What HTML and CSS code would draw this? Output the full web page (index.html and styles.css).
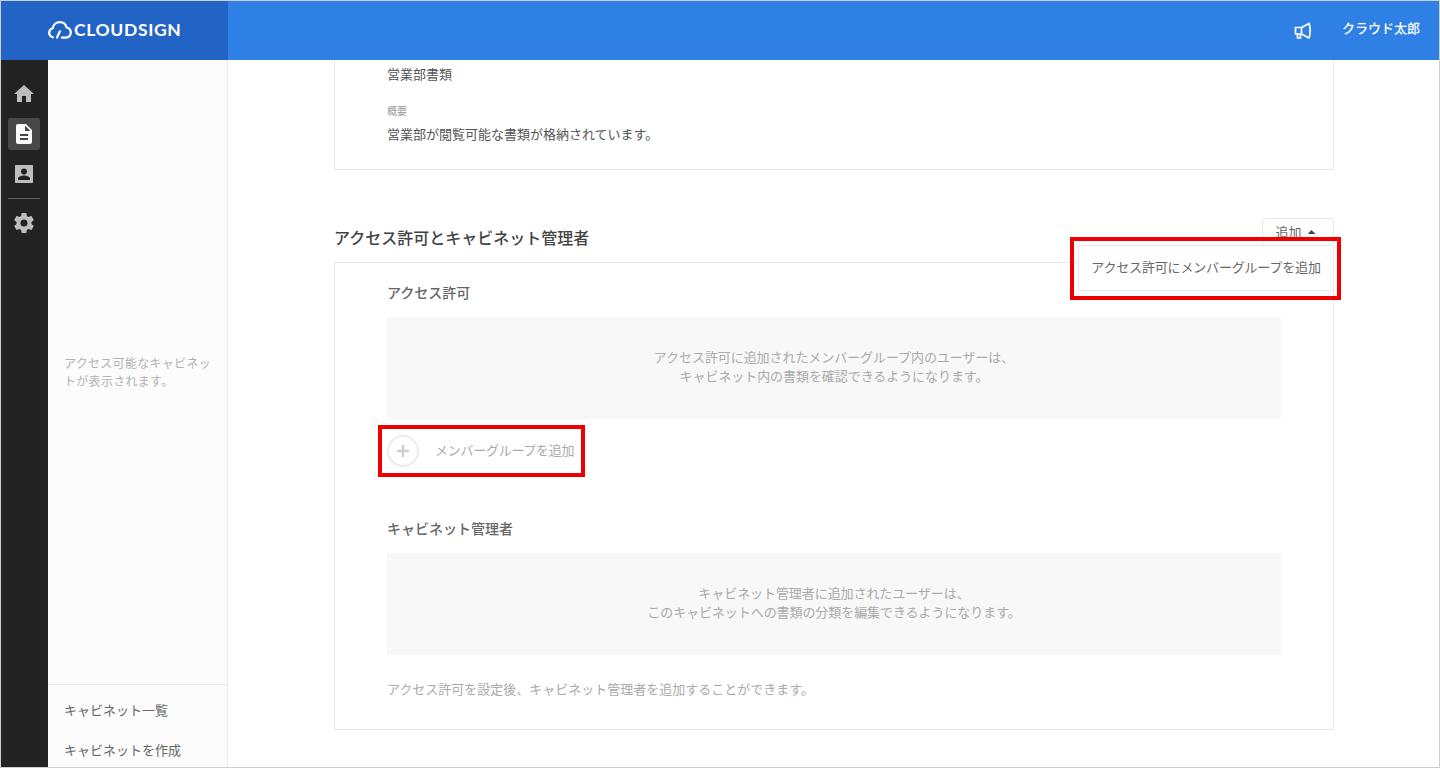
FILE: index.html
```html
<!DOCTYPE html>
<html lang="ja">
<head>
<meta charset="utf-8">
<title>CloudSign</title>
<link rel="stylesheet" href="styles.css">
</head>
<body>
<div class="frame">
  <header class="topbar">
    <div class="brand">
      <svg class="brand-icon" viewBox="0 0 24 18" width="24" height="18" fill="none" stroke="#fff" stroke-width="2.200" stroke-linecap="round" stroke-linejoin="round">
        <path d="M4.800 16.300C2.600 15.700 1.200 13.900 1.200 11.800c0-2.300 1.500-4 3.500-4.500C5.300 3.700 8.200 1.200 11.800 1.200c3.300 0 6 2.100 6.800 5.300 2.500.5 4.200 2.600 4.200 5.100 0 2.800-2.100 4.900-4.900 5h-4"/>
        <path d="M9 16.600l2.900-6.300"/>
      </svg>
      <span class="brand-name">CLOUDSIGN</span>
    </div>
    <div class="topbar-right">
      <svg class="megaphone" viewBox="0 0 18 17" width="18" height="17" fill="none" stroke="#fff" stroke-width="1.700" stroke-linejoin="round">
        <path d="M1.500 5.500h6v6.500h-6z"/>
        <path d="M7.500 5.500L15 1.500c1.500 3 1.500 11 0 14.500l-7.500-4"/>
        <path d="M3.500 12v4h3v-4"/>
      </svg>
      <span class="user-name">クラウド太郎</span>
    </div>
  </header>
  <div class="body">
    <nav class="rail">
      <a class="rail-item">
        <svg viewBox="0 0 24 24" width="24" height="24" fill="#bdbdbd"><path d="M10 20v-6h4v6h5v-8h3L12 3 2 12h3v8z"/></svg>
      </a>
      <a class="rail-item active">
        <svg viewBox="0 0 24 24" width="24" height="24" fill="#fff"><path d="M14 2H6c-1.100 0-2 .9-2 2v16c0 1.100.9 2 2 2h12c1.100 0 2-.9 2-2V8l-6-6zm2 16H8v-2h8v2zm0-4H8v-2h8v2zm-3-5V3.500L18.500 9H13z"/></svg>
      </a>
      <a class="rail-item">
        <svg viewBox="0 0 24 24" width="24" height="24" fill="#bdbdbd"><path d="M20 3H4c-.6 0-1 .4-1 1v16c0 .6.4 1 1 1h16c.6 0 1-.4 1-1V4c0-.6-.4-1-1-1zm-8 3.500a3 3 0 1 1 0 6 3 3 0 0 1 0-6zM18 18H6v-1.500c0-2 4-3.100 6-3.100s6 1.100 6 3.100V18z"/></svg>
      </a>
      <div class="rail-divider"></div>
      <a class="rail-item">
        <svg viewBox="0 0 24 24" width="24" height="24" fill="#bdbdbd"><path d="M19.430 12.980c.04-.32.07-.64.07-.98s-.03-.66-.07-.98l2.110-1.650c.19-.15.24-.42.12-.64l-2-3.460c-.12-.22-.39-.3-.61-.22l-2.490 1c-.52-.4-1.080-.73-1.690-.98l-.38-2.650A.488.488 0 0 0 14 2h-4c-.25 0-.46.18-.49.42l-.38 2.650c-.61.25-1.170.59-1.690.98l-2.490-1c-.23-.09-.49 0-.61.22l-2 3.460c-.13.22-.07.49.12.64l2.110 1.650c-.04.32-.07.65-.07.98s.03.66.07.98l-2.110 1.650c-.19.15-.24.42-.12.64l2 3.460c.12.22.39.3.61.22l2.490-1c.52.4 1.080.73 1.690.98l.38 2.650c.03.24.24.42.49.42h4c.25 0 .46-.18.49-.42l.38-2.650c.61-.25 1.170-.59 1.690-.98l2.490 1c.23.09.49 0 .61-.22l2-3.460c.12-.22.07-.49-.12-.64l-2.110-1.650zM12 15.500a3.500 3.500 0 1 1 0-7 3.500 3.500 0 0 1 0 7z"/></svg>
      </a>
    </nav>
    <aside class="sidebar">
      <div class="sidebar-empty"><p>アクセス可能なキャビネットが表示されます。</p></div>
      <div class="sidebar-links">
        <a>キャビネット一覧</a>
        <a>キャビネットを作成</a>
      </div>
    </aside>
    <main class="main">
      <section class="card info-card">
        <p class="info-value">営業部書類</p>
        <p class="info-label">概要</p>
        <p class="info-value">営業部が閲覧可能な書類が格納されています。</p>
      </section>
      <div class="section-head">
        <h2>アクセス許可とキャビネット管理者</h2>
        <div class="add-wrap">
          <button class="add-btn"><span class="add-text">追加</span><span class="caret"></span></button>
          <div class="add-menu">アクセス許可にメンバーグループを追加</div>
          <div class="highlight highlight-menu"></div>
        </div>
      </div>
      <section class="card access-card">
        <h3>アクセス許可</h3>
        <div class="notice">アクセス許可に追加されたメンバーグループ内のユーザーは、<br>キャビネット内の書類を確認できるようになります。</div>
        <div class="add-row">
          <span class="plus-circle"><svg viewBox="0 0 12 12" width="12" height="12" fill="none" stroke="#cfcfcf" stroke-width="2.400"><path d="M6 0v12M0 6h12"/></svg></span>
          <span class="add-label">メンバーグループを追加</span>
          <div class="highlight highlight-row"></div>
        </div>
        <h3 class="second">キャビネット管理者</h3>
        <div class="notice">キャビネット管理者に追加されたユーザーは、<br>このキャビネットへの書類の分類を編集できるようになります。</div>
        <p class="hint">アクセス許可を設定後、キャビネット管理者を追加することができます。</p>
      </section>
    </main>
  </div>
</div>
</body>
</html>
```
FILE: styles.css
```css
* { box-sizing: border-box; }
html, body { margin: 0; height: 100%; overflow: hidden; }
body {
  font-family: "Noto Sans CJK JP", "Noto Sans", sans-serif;
  color: #444;
  background: #fff;
}
.frame {
  width: 1440px;
  height: 768px;
  border: 1px solid #cfcfcf;
  display: flex;
  flex-direction: column;
  overflow: hidden;
}
.topbar {
  height: 59px;
  flex: none;
  background: #2f80e4;
  display: flex;
  justify-content: space-between;
  align-items: center;
}
.brand {
  width: 227px;
  height: 100%;
  background: #2264c6;
  display: flex;
  align-items: center;
  padding-left: 47px;
  gap: 2px;
}
.brand-icon { margin-bottom: 1px; }
.brand-name {
  font-family: "Lato", sans-serif;
  font-size: 17.5px;
  font-weight: 700;
  letter-spacing: .65px;
  color: #fff;
  padding-bottom: 2px;
}
.topbar-right {
  display: flex;
  align-items: center;
  padding-right: 19px;
  gap: 30px;
}
.megaphone { margin-bottom: 1px; }
.user-name {
  color: #fff;
  font-size: 13px;
  font-weight: 500;
  padding-bottom: 7px;
}
.body { flex: 1; display: flex; min-height: 0; }
.rail {
  width: 47px;
  flex: none;
  background: #222;
  display: flex;
  flex-direction: column;
  align-items: center;
  padding: 18px 1px 0 0;
  gap: 8px;
}
.rail-item {
  width: 32px;
  height: 32px;
  border-radius: 2px;
  display: flex;
  align-items: center;
  justify-content: center;
}
.rail-item.active { background: #484848; }
.rail-divider {
  width: 32px;
  height: 1px;
  background: #5f5f5f;
}
.sidebar {
  width: 180px;
  flex: none;
  background: #fcfcfc;
  border-right: 1px solid #e8e8e8;
  display: flex;
  flex-direction: column;
}
.sidebar-empty {
  flex: 1;
  display: flex;
  align-items: center;
  padding: 0 16px;
}
.sidebar-empty p {
  margin: 0;
  font-size: 12px;
  line-height: 18px;
  color: #b2b2b2;
  letter-spacing: .3px;
}
.sidebar-links {
  height: 83px;
  flex: none;
  border-top: 1px solid #e8e8e8;
  display: flex;
  flex-direction: column;
  padding: 4px 16px 0;
}
.sidebar-links a {
  height: 40px;
  flex: none;
  display: flex;
  align-items: center;
  font-size: 13px;
  color: #666;
}
.main {
  flex: 1;
  min-width: 0;
  padding: 0 105px 0 106px;
  overflow: hidden;
}
.card {
  background: #fff;
  border: 1px solid #e8e8e8;
}
.info-card {
  height: 150px;
  margin-top: -40px;
  padding: 43px 52px 0;
}
.info-card p { margin: 0; }
.info-value {
  font-size: 13px;
  line-height: 20px;
  color: #555;
}
.info-card .info-label {
  font-size: 10px;
  line-height: 14px;
  color: #999;
  margin: 20px 0 6px;
}
.section-head {
  height: 92px;
  display: flex;
  justify-content: space-between;
  align-items: flex-end;
}
.section-head h2 {
  margin: 0 0 13px;
  font-size: 16px;
  line-height: 24px;
  font-weight: 500;
  color: #444;
}
.add-wrap { position: relative; align-self: flex-end; margin-bottom: 16px; }
.add-btn {
  width: 72px;
  height: 28px;
  padding: 0 5px 0 0;
  background: #fff;
  border: 1px solid #e8e8e8;
  border-radius: 3px;
  font: inherit;
  font-size: 13px;
  color: #666;
  display: flex;
  align-items: center;
  justify-content: center;
  gap: 6px;
}
.add-text { padding-bottom: 2px; }
.caret {
  width: 8px;
  height: 4px;
  background: #444;
  clip-path: polygon(50% 0, 100% 100%, 0 100%);
  border-radius: 1px;
}
.add-menu {
  position: absolute;
  right: 0;
  top: 27px;
  width: 256px;
  height: 46px;
  background: #fff;
  border: 1px solid #e8e8e8;
  border-radius: 2px;
  font-size: 13px;
  letter-spacing: -.17px;
  line-height: 42px;
  text-align: center;
  white-space: nowrap;
  color: #666;
  z-index: 2;
}
.highlight {
  position: absolute;
  border: 4px solid #ee0000;
  z-index: 3;
  pointer-events: none;
}
.highlight-menu {
  right: -7px;
  top: 19px;
  width: 271px;
  height: 63px;
}
.access-card {
  height: 468px;
  padding: 19px 52px 0;
}
.access-card h3 {
  margin: 0;
  font-size: 14px;
  line-height: 20px;
  font-weight: 500;
  color: #666;
}
.access-card h3.second { margin-top: 51px; }
.notice {
  height: 102px;
  margin-top: 15px;
  padding-bottom: 5px;
  background: #f8f8f8;
  display: flex;
  align-items: center;
  justify-content: center;
  text-align: center;
  font-size: 13px;
  letter-spacing: -.07px;
  line-height: 19px;
  color: #aaa;
}
.add-row {
  position: relative;
  height: 32px;
  margin-top: 16px;
  display: flex;
  align-items: center;
  gap: 16px;
}
.plus-circle {
  width: 32px;
  height: 32px;
  border-radius: 50%;
  border: 2px solid #ececec;
  display: flex;
  align-items: center;
  justify-content: center;
  flex: none;
}
.add-label {
  font-size: 13px;
  letter-spacing: -.27px;
  padding-bottom: 4px;
  color: #aaa;
}
.highlight-row {
  left: -9px;
  top: -10px;
  width: 207px;
  height: 52px;
}
.hint {
  margin: 24px 0 0;
  font-size: 13px;
  line-height: 20px;
  color: #aaa;
}
```
